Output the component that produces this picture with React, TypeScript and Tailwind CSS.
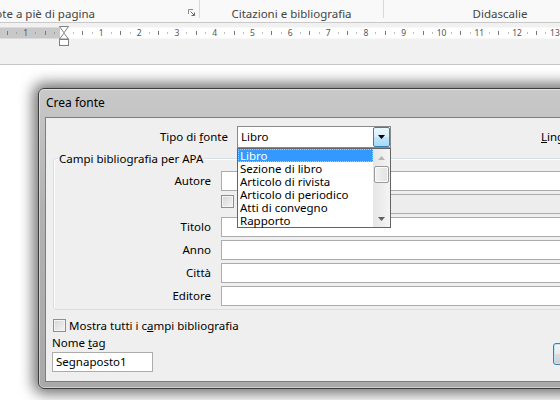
import React from "react";

const FONT = "font-['Noto_Sans',sans-serif]";

function Ruler() {
  const zero = 63.5;
  const u = 37.8;
  const els: React.ReactNode[] = [];
  for (let k = -2; k <= 13; k++) {
    const x = zero + k * u;
    if (k !== 0) {
      els.push(
        <text key={"n" + k} x={x} y={12.8} fontSize="8.5" textAnchor="middle" fill="#555" fontFamily="Noto Sans, sans-serif">
          {Math.abs(k)}
        </text>
      );
    }
    els.push(<rect key={"a" + k} x={Math.round(x + u * 0.25)} y={9.5} width={1} height={1} fill="#7a7a7a" />);
    els.push(<rect key={"b" + k} x={Math.round(x + u * 0.5)} y={8} width={1} height={4} fill="#7a7a7a" />);
    els.push(<rect key={"c" + k} x={Math.round(x + u * 0.75)} y={9.5} width={1} height={1} fill="#7a7a7a" />);
  }
  return (
    <svg width="560" height="41" viewBox="0 0 560 41" className="block">
      <rect x="0" y="4.5" width="60" height="11" fill="#c8c8c8" />
      <rect x="60" y="4.5" width="500" height="11" fill="#ffffff" />
      {els}
      <polygon points="59.5,3.5 68.5,3.5 64,9.8" fill="#fff" stroke="#808080" strokeWidth="1" />
      <polygon points="64,10.2 68.5,16 59.5,16" fill="#fff" stroke="#808080" strokeWidth="1" />
      <rect x="59.5" y="16.5" width="9" height="6" fill="#fff" stroke="#808080" strokeWidth="1" />
    </svg>
  );
}

function Checkbox() {
  return (
    <div className="w-[13px] h-[13px] border border-[#8e8f8f] bg-[linear-gradient(135deg,#d4d4d4,#f6f6f6)] shadow-[inset_0_0_0_1px_#f4f4f4] shrink-0" />
  );
}

function Field({ w = "w-[420px]", disabled = false, children }: { w?: string; disabled?: boolean; children?: React.ReactNode }) {
  return (
    <div
      className={`${w} shrink-0 h-[20px] border border-[#acacac] flex items-center pl-[3px] ${disabled ? "bg-[#ededed]" : "bg-white"}`}
    >
      {children}
    </div>
  );
}

function Row({ label }: { label: string }) {
  return (
    <div className="flex items-center h-[20px]">
      <div className="w-[157px] shrink-0 text-right">{label}</div>
      <div className="ml-[10px] shrink-0">
        <Field />
      </div>
    </div>
  );
}

export default function App() {
  const items = ["Libro", "Sezione di libro", "Articolo di rivista", "Articolo di periodico", "Atti di convegno", "Rapporto"];
  return (
    <div className={`relative w-[560px] h-[400px] overflow-hidden bg-white text-[11.5px] text-black ${FONT}`}>
      {/* Ribbon group labels */}
      <div className="h-[23px] bg-[#f9f9f9] border-b border-[#c9c9c9] flex items-start text-[#444]">
        <div className="w-[199px] shrink-0 h-[22px] flex items-end">
          <div className="w-[95px] shrink-0 flex justify-end whitespace-nowrap leading-[16px]">Note a piè di pagina</div>
          <svg width="8" height="8" viewBox="0 0 8 8" className="ml-[93px] mb-[5px] shrink-0">
            <path d="M0.5 5 V0.5 H5" stroke="#8a8a8a" fill="none" />
            <path d="M2.5 2.5 L6.5 6.5 M6.5 3.5 V6.5 H3.5" stroke="#6a6a6a" fill="none" />
          </svg>
        </div>
        <div className="w-[1px] shrink-0 h-[18px] bg-[#dadada]" />
        <div className="w-[183px] shrink-0 h-[22px] flex items-end justify-center leading-[16px] whitespace-nowrap">Citazioni e bibliografia</div>
        <div className="w-[1px] shrink-0 h-[18px] bg-[#dadada]" />
        <div className="w-[232px] shrink-0 h-[22px] flex items-end justify-center leading-[16px] whitespace-nowrap">Didascalie</div>
      </div>
      {/* Ruler area */}
      <div className="h-[42px] bg-[#f1f1f1] border-b border-[#c6c6c6]">
        <Ruler />
      </div>

      {/* Dialog window */}
      <div className="absolute left-[38px] top-[88px] w-[560px] h-[301px] rounded-[6px] border border-[#3c3c3c] bg-[linear-gradient(180deg,#c9c9c9_0%,#b2b2b2_40%,#a9a9a9_100%)] shadow-[0_0_14px_5px_rgba(0,0,0,0.55),inset_0_0_0_1px_rgba(255,255,255,0.45)] flex flex-col px-[6px] pb-[6px]">
        <div className="h-[28px] flex items-center pl-[1px] text-[12px] text-black">Crea fonte</div>
        <div className="relative flex-1 border border-[#7d7d7d] bg-[#efefef]">
          {/* Tipo di fonte */}
          <div className="mt-[8px] flex items-center h-[22px]">
            <div className="w-[182px] shrink-0 text-right">
              Tipo di <u>f</u>onte
            </div>
            <div className="ml-[9px] shrink-0 relative w-[154px] h-[22px] border border-[#8a8a8a] bg-white flex items-center pl-[3px]">
              Libro
              <div className="absolute right-0 top-0 bottom-0 w-[17px] border border-[#3c7fb1] rounded-[2px] bg-[linear-gradient(180deg,#eaf6fd_0%,#d9f0fc_50%,#bee6fd_51%,#a7d9f5_100%)] flex items-center justify-center">
                <svg width="7" height="4" viewBox="0 0 7 4">
                  <polygon points="0,0 7,0 3.5,4" fill="#000" />
                </svg>
              </div>
            </div>
            <div className="ml-[150px] shrink-0 whitespace-nowrap">
              <u>L</u>ingua
            </div>
          </div>

          {/* Group box */}
          <div className="relative mt-[10px] ml-[7px] w-[600px] border border-[#d5dfe5] rounded-[3px] shadow-[inset_1px_1px_0_#fff] pt-[12px] pb-[3px]">
            <div className="absolute left-[4px] top-[-8px] px-[1px] bg-[#efefef] leading-[15px]">Campi bibliografia per APA</div>
            <div className="flex flex-col gap-[3px]">
              <Row label="Autore" />
              <div className="flex items-start h-[20px] ml-[167px]">
                <div className="mt-[1px] shrink-0">
                  <Checkbox />
                </div>
                <div className="ml-[4px] shrink-0">
                  <Field disabled w="w-[380px]" />
                </div>
              </div>
              <Row label="Titolo" />
              <Row label="Anno" />
              <Row label="Città" />
              <Row label="Editore" />
            </div>
          </div>

          {/* Mostra tutti */}
          <div className="mt-[9px] ml-[7px] flex items-center gap-[3px] h-[13px] leading-[13px]">
            <Checkbox />
            <span>
              Mostra tutti i c<u>a</u>mpi bibliografia
            </span>
          </div>

          {/* Nome tag + button */}
          <div className="flex items-start mt-[3px] ml-[6px]">
            <div className="w-[101px] shrink-0">
              <div className="leading-[15px]">
                Nome <u>t</u>ag
              </div>
              <div className="mt-[2px] w-[101px] h-[20px] border border-[#acacac] bg-white flex items-center pl-[3px]">Segnaposto1</div>
            </div>
            <div className="ml-[400px] shrink-0 mt-[8px] w-[75px] h-[22px] rounded-[3px] border border-[#3c7fb1] bg-[linear-gradient(180deg,#f4f4f4_0%,#ebebeb_50%,#dddddd_51%,#cfcfcf_100%)] shadow-[inset_0_0_0_1px_#bfe4f8]" />
          </div>

          {/* Dropdown list */}
          <div className="absolute left-[191px] top-[30px] w-[154px] h-[80px] border border-[#646464] bg-white flex leading-[13px]">
            <div className="flex-1 flex flex-col">
              {items.map((t, i) => (
                <div
                  key={t}
                  className={`h-[13px] pl-[2px] whitespace-nowrap ${
                    i === 0 ? "bg-[#3399ff] text-white outline-1 outline-dotted outline-[#f5c27a] -outline-offset-1" : ""
                  }`}
                >
                  {t}
                </div>
              ))}
            </div>
            <div className="w-[17px] shrink-0 bg-[linear-gradient(90deg,#e6e6e6,#f4f4f4)] flex flex-col items-center">
              <div className="h-[17px] w-[17px] flex items-center justify-center">
                <svg width="7" height="4" viewBox="0 0 7 4">
                  <polygon points="0,4 7,4 3.5,0" fill="#b5b5b5" />
                </svg>
              </div>
              <div className="w-[15px] h-[17px] rounded-[2px] border border-[#9a9a9a] bg-[linear-gradient(90deg,#f2f2f2,#e2e2e2)] shadow-[inset_0_0_0_1px_#fafafa]" />
              <div className="flex-1" />
              <div className="h-[17px] w-[17px] flex items-center justify-center">
                <svg width="7" height="4" viewBox="0 0 7 4">
                  <polygon points="0,0 7,0 3.5,4" fill="#606060" />
                </svg>
              </div>
            </div>
          </div>
        </div>
      </div>
    </div>
  );
}
